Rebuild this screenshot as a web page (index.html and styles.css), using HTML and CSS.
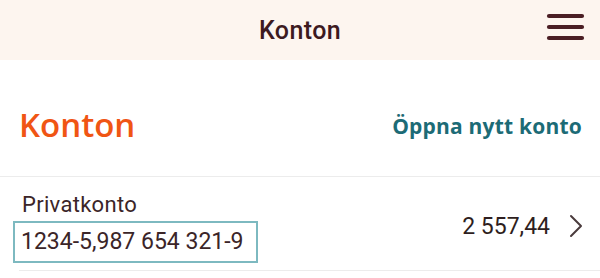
FILE: index.html
```html
<!DOCTYPE html>
<html lang="sv">
<head>
<meta charset="utf-8">
<title>Konton</title>
<link rel="stylesheet" href="styles.css">
</head>
<body>
<header class="topbar">
  <span class="spacer"></span>
  <h1 class="topbar-title">Konton</h1>
  <button class="menu-btn" aria-label="Meny">
    <svg width="40" height="28" viewBox="0 0 40 28">
      <g stroke="#4b1e24" stroke-width="4.2" stroke-linecap="round">
        <line x1="3" y1="3" x2="36" y2="3"/>
        <line x1="3" y1="14" x2="36" y2="14"/>
        <line x1="3" y1="25" x2="36" y2="25"/>
      </g>
    </svg>
  </button>
</header>
<main>
  <section class="section-head">
    <h2 class="section-title">Konton</h2>
    <a class="open-link" href="#">Öppna nytt konto</a>
  </section>
  <div class="account-row">
    <div class="account-info">
      <div class="account-name">Privatkonto</div>
      <div class="account-number">1234-5,987 654 321-9</div>
    </div>
    <div class="account-balance">2 557,44</div>
    <svg class="chevron" width="14" height="24" viewBox="0 0 14 24">
      <polyline points="2,2 12,12 2,22" fill="none" stroke="#4a3b3d" stroke-width="2" stroke-linecap="round" stroke-linejoin="round"/>
    </svg>
  </div>
</main>
</body>
</html>
```
FILE: styles.css
```css
* { box-sizing: border-box; }
html, body { margin: 0; padding: 0; background: #ffffff; }
body { width: 600px; height: 278px; overflow: hidden; font-family: Roboto, "Liberation Sans", sans-serif; }

.topbar {
  height: 60px;
  background: #fdf5ef;
  display: grid;
  grid-template-columns: 1fr auto 1fr;
  align-items: center;
}
.topbar-title {
  margin: 0;
  font-family: Roboto, sans-serif;
  font-weight: 500;
  font-size: 25px;
  color: #3d1a1f;
  letter-spacing: 0.4px;
}
.menu-btn {
  justify-self: end;
  margin-right: 14px;
  margin-top: -6px;
  background: none;
  border: 0;
  padding: 0;
  display: flex;
}

.section-head {
  height: 117px;
  border-bottom: 1px solid #ececec;
  display: flex;
  align-items: center;
  justify-content: space-between;
  padding: 12px 18px 0 19px;
}
.section-title {
  margin: 0;
  font-family: "Open Sans", sans-serif;
  font-weight: 600;
  font-size: 33px;
  color: #f05514;
}
.open-link {
  font-family: "Open Sans", sans-serif;
  font-weight: 700;
  font-size: 21px;
  letter-spacing: 0.2px;
  color: #1c6b76;
  text-decoration: none;
  margin-top: 4px;
}

.account-row {
  margin-left: 19px;
  height: 94px;
  border-bottom: 1px solid #ececec;
  display: flex;
  align-items: center;
  padding-right: 17px;
}
.account-info {
  flex: 1;
  align-self: flex-start;
  margin-top: 15px;
  display: flex;
  flex-direction: column;
}
.account-name {
  font-size: 22px;
  letter-spacing: 0.3px;
  color: #3b2528;
  padding-left: 3px;
  line-height: 26px;
}
.account-number {
  align-self: flex-start;
  margin-left: -6px;
  margin-top: 3px;
  border: 2px solid #7db9c0;
  padding: 0 12px 0 6px;
  height: 42px;
  line-height: 38px;
  font-size: 23px;
  color: #3b2528;
}
.account-balance {
  font-size: 23px;
  color: #2e1e20;
  margin-right: 19px;
  margin-top: 6px;
}
.chevron { margin-top: 4px; }
```
